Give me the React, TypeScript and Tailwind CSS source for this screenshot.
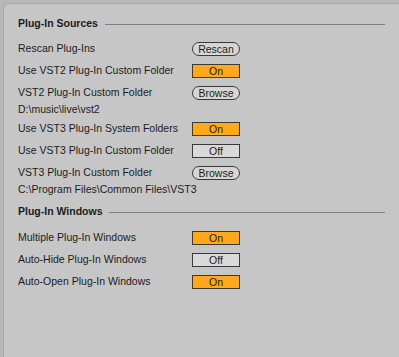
type Control =
  | { kind: "button"; label: string }
  | { kind: "toggle"; on: boolean };

type Row = {
  label: string;
  control: Control;
  path?: string;
};

const sources: Row[] = [
  { label: "Rescan Plug-Ins", control: { kind: "button", label: "Rescan" } },
  { label: "Use VST2 Plug-In Custom Folder", control: { kind: "toggle", on: true } },
  { label: "VST2 Plug-In Custom Folder", control: { kind: "button", label: "Browse" }, path: "D:\\music\\live\\vst2" },
  { label: "Use VST3 Plug-In System Folders", control: { kind: "toggle", on: true } },
  { label: "Use VST3 Plug-In Custom Folder", control: { kind: "toggle", on: false } },
  {
    label: "VST3 Plug-In Custom Folder",
    control: { kind: "button", label: "Browse" },
    path: "C:\\Program Files\\Common Files\\VST3",
  },
];

const windows: Row[] = [
  { label: "Multiple Plug-In Windows", control: { kind: "toggle", on: true } },
  { label: "Auto-Hide Plug-In Windows", control: { kind: "toggle", on: false } },
  { label: "Auto-Open Plug-In Windows", control: { kind: "toggle", on: true } },
];

function ControlView({ control }: { control: Control }) {
  if (control.kind === "button") {
    return (
      <div className="flex h-[14px] w-[48px] items-center justify-center rounded-full border border-[#3a3a3a] bg-[#d6d6d6] leading-none">
        {control.label}
      </div>
    );
  }
  return (
    <div
      className={
        control.on
          ? "flex h-[14px] w-[48px] items-center justify-center border border-[#3a3a3a] bg-[#ffa81c] leading-none"
          : "flex h-[14px] w-[48px] items-center justify-center border border-[#3a3a3a] bg-[#d9d9d9] leading-none"
      }
    >
      {control.on ? "On" : "Off"}
    </div>
  );
}

function SettingRow({ row }: { row: Row }) {
  return (
    <div className="flex flex-col">
      <div className="flex h-[22px] items-center">
        <span className="w-[174px]">{row.label}</span>
        <ControlView control={row.control} />
      </div>
      {row.path ? <div className="-mt-[3px] mb-[1px] h-[16px] leading-[16px]">{row.path}</div> : null}
    </div>
  );
}

function Section({ title, rows, second }: { title: string; rows: Row[]; second?: boolean }) {
  return (
    <div className="flex flex-col">
      <div className="flex h-[16px] items-center gap-[7px]">
        <span className="font-bold">{title}</span>
        <div className="h-px flex-1 bg-[#808080]" />
      </div>
      <div className={second ? "mt-[7px] flex flex-col" : "mt-[6px] flex flex-col"}>
        {rows.map((row) => (
          <SettingRow key={row.label} row={row} />
        ))}
      </div>
    </div>
  );
}

export default function App() {
  return (
    <div className="h-[357px] w-[399px] bg-[#b8b8b8] pl-[3px] pt-[3px]">
      <div className="flex h-full flex-col gap-[6px] rounded-tl-[6px] border-l border-t border-[#a8a8a8] bg-[#c6c6c6] pl-[14px] pr-[14px] pt-[12px] font-['Liberation_Sans',Arial,sans-serif] text-[10.5px] text-[#1c1c1c]">
        <Section title="Plug-In Sources" rows={sources} />
        <Section title="Plug-In Windows" rows={windows} second />
      </div>
    </div>
  );
}
